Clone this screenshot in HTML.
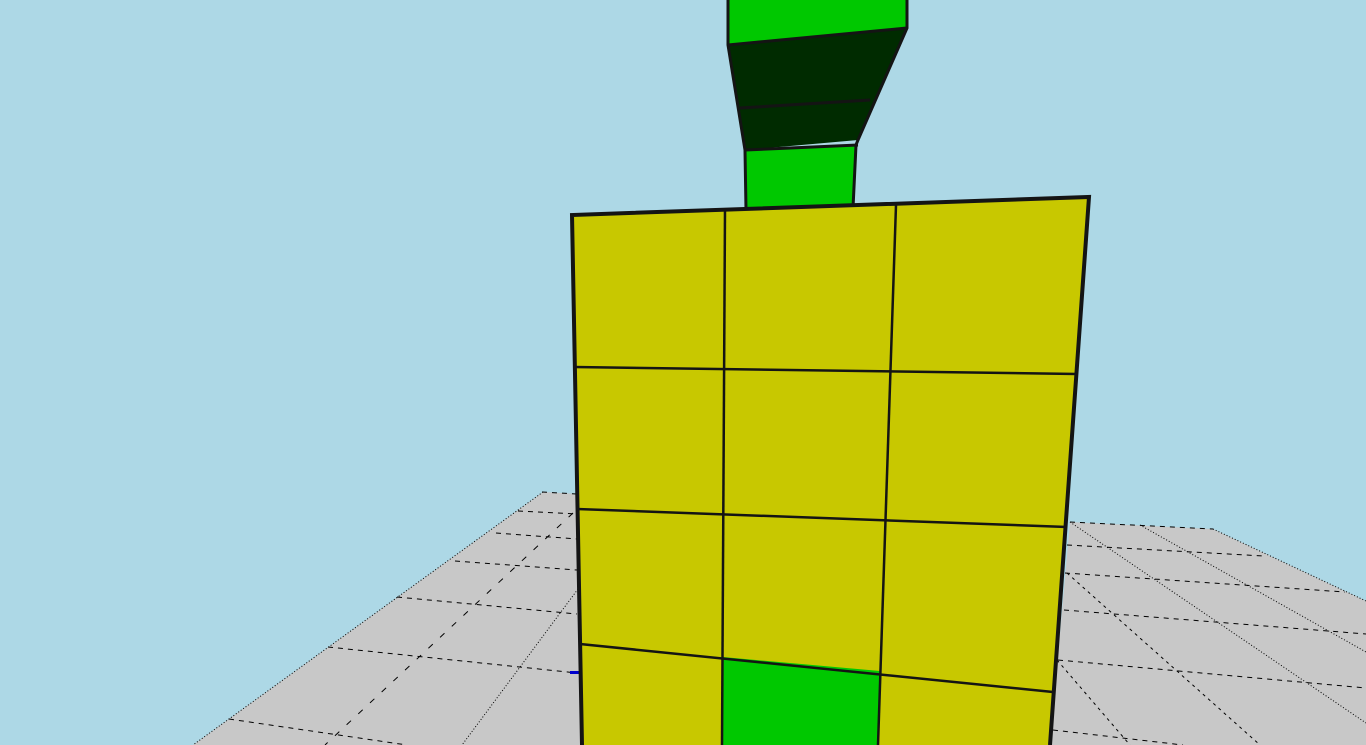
<!DOCTYPE html>
<html><head><meta charset="utf-8"><style>html,body{margin:0;padding:0;overflow:hidden;background:#add8e6}svg{display:block}</style></head>
<body>
<svg width="1366" height="745" viewBox="0 0 1366 745" xmlns="http://www.w3.org/2000/svg">
<rect width="1366" height="745" fill="#add8e6"/>
<!-- floor -->
<polygon points="543,492 580,494 580,745 193,745" fill="#c8c8c8"/>
<polygon points="1070,522 1213,529 1366,601 1366,745 1050,745" fill="#c8c8c8"/>
<g stroke="#000" stroke-width="1" fill="none">
<line x1="543" y1="492" x2="193" y2="745" stroke-dasharray="1,2"/>
<line x1="1213" y1="529" x2="1366" y2="601" stroke-dasharray="1,2"/>
<g stroke-dasharray="5,5">
<line x1="542" y1="492" x2="577" y2="494"/>
<line x1="518" y1="511" x2="577" y2="514"/>
<line x1="496" y1="533" x2="577" y2="539"/>
<line x1="455" y1="561" x2="577" y2="570"/>
<line x1="397" y1="597" x2="577" y2="614"/>
<line x1="328" y1="647" x2="577" y2="673"/>
<line x1="229" y1="719" x2="407" y2="745"/>
<line x1="573" y1="513" x2="325" y2="745" stroke-dasharray="6,10"/>
<line x1="1070" y1="522" x2="1213" y2="529"/>
<line x1="1067" y1="545" x2="1264" y2="556"/>
<line x1="1065" y1="573" x2="1345" y2="592"/>
<line x1="1064" y1="610" x2="1366" y2="634"/>
<line x1="1058" y1="660" x2="1366" y2="688"/>
<line x1="1053" y1="730" x2="1183" y2="745"/>
<line x1="1067" y1="573" x2="1260" y2="745" stroke-dasharray="3,4"/>
<line x1="1057" y1="660" x2="1130" y2="745" stroke-dasharray="3,4"/>
</g>
<g stroke-dasharray="1,2">
<line x1="578" y1="589" x2="462" y2="745"/>
<line x1="1070" y1="522" x2="1366" y2="723"/>
<line x1="1140" y1="525" x2="1366" y2="652"/>
</g>
</g>
<rect x="570" y="671" width="10" height="3" fill="#0000cc"/>
<!-- tower -->
<polygon points="728,0 907,0 907,28 728,45" fill="#00c800"/>
<polygon points="728,45 907,28 858,140 745,150" fill="#002b00"/>
<polygon points="745,150 856,145 853,208 746,210" fill="#00c800"/>
<g stroke="#141414" stroke-width="3" fill="none">
<polyline points="728,0 728,45 745,150 746,210"/>
<polyline points="907,0 907,28 858,140 856,145 853,208"/>
<line x1="728" y1="45" x2="907" y2="28"/>
<line x1="740" y1="108" x2="870" y2="100"/>
<line x1="745" y1="150" x2="858" y2="145"/>
</g>
<!-- board -->
<polygon points="572,215 1089,197 1050,745 582,745" fill="#c8c800"/>
<polygon points="723,657 880,671 878,745 722,745" fill="#00c800"/>
<g stroke="#141414" fill="none">
<line x1="725" y1="209" x2="722" y2="745" stroke-width="2.5"/>
<line x1="896" y1="205" x2="878" y2="745" stroke-width="2.5"/>
<line x1="574" y1="367" x2="1077" y2="374" stroke-width="2.5"/>
<line x1="577" y1="509" x2="1067" y2="527" stroke-width="2.5"/>
<line x1="580" y1="644" x2="1053" y2="692" stroke-width="2.5"/>
<polyline points="582,745 572,215 1089,197 1050,745" stroke-width="4"/>
</g>
</svg>
</body></html>
